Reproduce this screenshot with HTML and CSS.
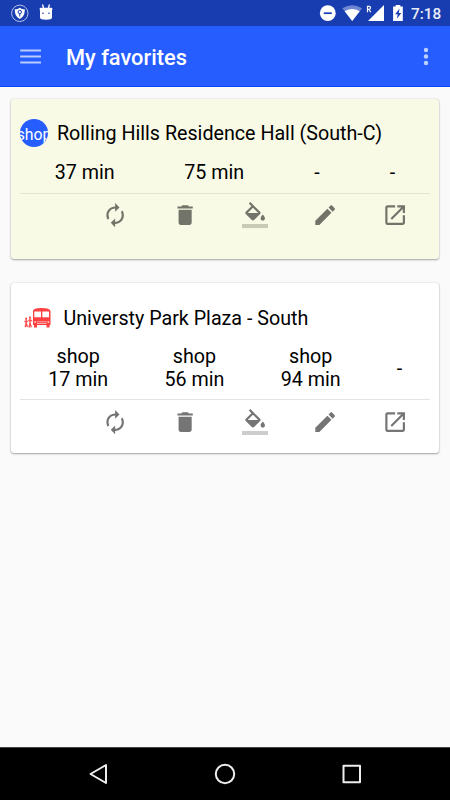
FILE: index.html
```html
<!DOCTYPE html>
<html lang="en">
<head>
<meta charset="utf-8">
<title>My favorites</title>
<link rel="stylesheet" href="styles.css">
</head>
<body>
<svg class="defs" aria-hidden="true">
  <symbol id="refresh" viewBox="0 0 24 24"><path d="M12 6v3l4-4-4-4v3c-4.42 0-8 3.58-8 8 0 1.57.46 3.03 1.24 4.26L6.7 14.8c-.45-.83-.7-1.79-.7-2.8 0-3.31 2.69-6 6-6zm6.76 1.74L17.3 9.2c.44.84.7 1.79.7 2.8 0 3.31-2.69 6-6 6v-3l-4 4 4 4v-3c4.42 0 8-3.58 8-8 0-1.57-.46-3.03-1.24-4.26z"/></symbol>
  <symbol id="delete" viewBox="0 0 24 24"><path d="M6 19c0 1.1.9 2 2 2h8c1.100 0 2-.9 2-2V7H6v12zM19 4h-3.500l-1-1h-5l-1 1H5v2h14V4z"/></symbol>
  <symbol id="fill" viewBox="0 0 24 24"><path d="M16.560 8.940L7.620 0 6.210 1.410l2.380 2.380-5.150 5.150c-.59.59-.59 1.540 0 2.120l5.500 5.500c.29.29.68.44 1.060.44s.77-.15 1.060-.44l5.500-5.500c.59-.58.59-1.530 0-2.120zM5.210 10L10 5.210 14.790 10H5.210zM19 11.500s-2 2.170-2 3.500c0 1.100.9 2 2 2s2-.9 2-2c0-1.330-2-3.500-2-3.500z"/><path opacity=".36" d="M0 20h24v4H0z"/></symbol>
  <symbol id="edit" viewBox="0 0 24 24"><path d="M3 17.250V21h3.750L17.810 9.940l-3.750-3.750L3 17.250zM20.710 7.040c.39-.39.39-1.020 0-1.410l-2.340-2.340c-.39-.39-1.020-.39-1.410 0l-1.830 1.830 3.750 3.750 1.830-1.830z"/></symbol>
  <symbol id="open" viewBox="0 0 24 24"><path d="M19 19H5V5h7V3H5c-1.110 0-2 .9-2 2v14c0 1.100.89 2 2 2h14c1.100 0 2-.9 2-2v-7h-2v7zM14 3v2h3.590l-9.830 9.830 1.410 1.410L19 6.410V10h2V3h-7z"/></symbol>
</svg>

<header class="status">
  <svg class="status-icons" width="60" height="26" viewBox="0 0 60 26">
    <circle cx="19.800" cy="13.300" r="8.200" fill="none" stroke="#b4c2ea"/>
    <path d="M19.800 7.800c1.600 1.200 3.200 1.500 5 1.500 0 4.500-1 7.500-5 9.700-4-2.200-5-5.200-5-9.700 1.800 0 3.400-.3 5-1.500z" fill="#fff"/>
    <circle cx="19.800" cy="12" r="1.700" fill="none" stroke="#183db0"/>
    <path d="M19.800 13.500v3" stroke="#183db0"/>
    <path d="M42.500 4.500l1.200 4M49.500 4.500l-1.200 4" stroke="#fff" stroke-width="1.300"/>
    <path d="M40.800 7.700h10.400q1.200 0 1.200 1.300-.6 1.500-.4 3.500v5q0 2.200-6 2.200t-6-2.200v-5q.2-2-.4-3.500 0-1.300 1.200-1.300z" fill="#fff"/>
    <circle cx="43" cy="13.200" r=".8" fill="#183db0"/><circle cx="49" cy="13.200" r=".8" fill="#183db0"/>
  </svg>
  <svg class="status-icons" width="92" height="26" viewBox="315 0 92 26">
    <circle cx="327.800" cy="13.200" r="7.900" fill="#fff"/>
    <path d="M323.800 13.200h8" stroke="#183db0" stroke-width="1.700"/>
    <path d="M342.300 8.300Q352.200 2 362.100 8.300L352.200 21z" fill="#6f87d2"/>
    <path d="M344.700 11.300Q352.200 6.600 359.700 11.300L352.200 21z" fill="#fff"/>
    <path d="M367.500 12.300V6.300h1.500q1.500 0 1.500 1.500t-1.500 1.500h-1.500m1.500 0l1.700 3" fill="none" stroke="#fff" stroke-width="1.200"/>
    <path d="M384 5v16h-16z" fill="#fff"/>
    <path d="M395.700 5h4.600v1.600h2.500V21h-9.700V6.600h2.600z" fill="#fff"/>
    <path d="M399.600 8.500l-4.500 5.800h2.600l-.8 4.500 4.400-5.800h-2.600z" fill="#183db0"/>
  </svg>
  <span class="clock">7:18</span>
</header>

<div class="toolbar">
  <svg width="22" height="18" viewBox="0 0 22 18"><path d="M0.200 3.500h20.800M0.200 9.500h20.800M0.200 15.500h20.800" stroke="#b9cbff" stroke-width="2.100"/></svg>
  <h1>My favorites</h1>
  <svg width="6" height="22" viewBox="0 0 6 22" fill="#bed0ff"><circle cx="3" cy="5" r="2.200"/><circle cx="3" cy="11.500" r="2.200"/><circle cx="3" cy="18" r="2.200"/></svg>
</div>

<main>
  <section class="card tinted">
    <div class="heading"><span class="badge">shop</span><h2>Rolling Hills Residence Hall (South-C)</h2></div>
    <div class="times short"><span>37 min</span><span>75 min</span><span>-</span><span>-</span></div>
    <div class="actions">
      <svg><use href="#refresh"/></svg><svg><use href="#delete"/></svg><svg><use href="#fill"/></svg><svg><use href="#edit"/></svg><svg><use href="#open"/></svg>
    </div>
  </section>
  <section class="card">
    <div class="heading bus-heading">
      <svg class="bus" width="28" height="22" viewBox="0 0 28 22" fill="#ff3f40">
        <path d="M9 4Q9 1 17.500 1T26.500 4V18h-1v2.500h-3V18H13v2.500h-3V18H9z"/>
        <path d="M10.300 4.500h6.700v5.700h-6.700zM18.300 4.500h6.700v5.700h-6.700z" fill="#fff"/>
        <path d="M13 14.800h9.500M13 16.500h9.500" stroke="#ffc2c2" stroke-width=".8"/>
        <circle cx="11.200" cy="15" r="1" fill="#ffc2c2"/><circle cx="24.300" cy="15" r="1" fill="#ffc2c2"/>
        <circle cx="2.200" cy="11.500" r="1"/><circle cx="6" cy="10.700" r="1.100"/>
        <path d="M2.200 12v4l-1 4M2.200 16l1.200 4M.4 14.500h3.500M6 11.500v5l-1 4M6 16l1.300 4.300M4.300 13.500h3.900" fill="none" stroke="#ff5051" stroke-width="1.400"/>
      </svg>
      <h2>Universty Park Plaza - South</h2>
    </div>
    <div class="times tall"><span>shop<br>17 min</span><span>shop<br>56 min</span><span>shop<br>94 min</span><span>-</span></div>
    <div class="actions">
      <svg><use href="#refresh"/></svg><svg><use href="#delete"/></svg><svg><use href="#fill"/></svg><svg><use href="#edit"/></svg><svg><use href="#open"/></svg>
    </div>
  </section>
</main>

<nav>
  <svg width="24" height="24" viewBox="0 0 24 24"><path d="M20 3v18L4.500 12z"/></svg>
  <svg width="24" height="24" viewBox="0 0 24 24"><circle cx="12" cy="12" r="9.200"/></svg>
  <svg width="24" height="24" viewBox="0 0 24 24"><path d="M3.500 3.800h16.500v16.500h-16.500z"/></svg>
</nav>
</body>
</html>
```
FILE: styles.css
```css
* { box-sizing: border-box; }
body {
  margin: 0;
  height: 800px;
  display: flex;
  flex-direction: column;
  overflow: hidden;
  background: #fafafa;
  color: #000;
  font-family: Roboto, "Liberation Sans", sans-serif;
}
svg { display: block; flex: none; }
h1, h2 { margin: 0; white-space: nowrap; }
.defs { display: none; }

.status {
  height: 26px;
  display: flex;
  align-items: center;
  background: #183db0;
  color: #fff;
}
.status-icons + .status-icons { margin-left: 255px; }
.clock { margin-left: 4px; font-size: 15.3px; font-weight: 500; line-height: 26px; padding-top: 2px; color: #e8ecf8; }

.toolbar {
  height: 61px;
  display: flex;
  align-items: center;
  padding: 0 21px 0 20px;
  background: #255dff;
  border-bottom: 1px solid #0b49f5;
}
.toolbar h1 {
  flex: 1;
  margin-left: 24px;
  padding-top: 4px;
  color: #fff;
  font-size: 21.800px;
  font-weight: 500;
  line-height: 30px;
}

main {
  flex: 1;
  display: flex;
  flex-direction: column;
  gap: 24px;
  padding: 12px 11px;
}
.card {
  height: 169.500px;
  padding: 0 9px;
  border-radius: 3px;
  background: #fff;
  box-shadow: 0 1px 2px rgba(0, 0, 0, .32), 0 0 2px rgba(0, 0, 0, .14);
}
.tinted { height: 160px; background: #f9fae5; }
.heading { display: flex; align-items: center; height: 61px; padding-top: 8px; }
.tinted .heading { height: 62px; padding-top: 6px; }
h2 { font-size: 19.680px; font-weight: 400; line-height: 24px; padding-top: 2px; }
.badge {
  display: flex;
  align-items: center;
  justify-content: center;
  width: 28px;
  height: 28px;
  margin-right: 9px;
  overflow: hidden;
  border-radius: 50%;
  background: #255dff;
  color: #fff;
  font-size: 15.800px;
  padding-top: 3px;
}
.bus { margin: 0 11.500px 0 4px; }

.times {
  display: grid;
  align-items: center;
  text-align: center;
  font-size: 19.7px;
  line-height: 23px;
  border-bottom: 1px solid #e4e4e4;
}
.short { grid-template-columns: 129.500px 129.500px 76px 75px; height: 33px; padding-bottom: 10px; border-color: #e2e3d0; }
.tall { grid-template-columns: 116.300px 116.300px 116.300px 61.100px; height: 56px; padding-bottom: 7px; }
.actions { display: flex; justify-content: flex-end; padding-top: 8.300px; }
.card:not(.tinted) .actions { padding-top: 8.700px; }
.actions svg { width: 26.250px; height: 26.250px; margin: 0 21.870px; fill: #757575; }
.actions svg:last-child { margin-right: 21.600px; }
.tinted .actions svg { fill: #737469; }

nav {
  height: 53px;
  display: flex;
  align-items: center;
  justify-content: center;
  gap: 103px;
  background: #000;
  border-top: 1px solid #444;
}
nav svg { fill: none; stroke: #eee; stroke-width: 2; stroke-linejoin: round; }
```
